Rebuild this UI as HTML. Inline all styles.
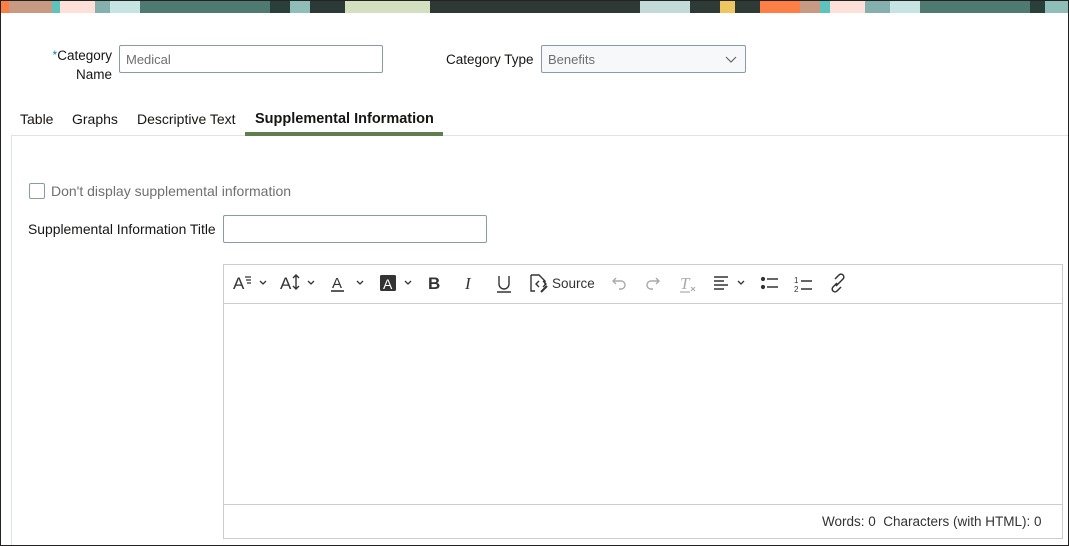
<!DOCTYPE html>
<html><head><meta charset="utf-8"><style>
*{box-sizing:border-box;margin:0;padding:0}
html,body{width:1069px;height:546px;overflow:hidden;background:#fff}
body{font-family:"Liberation Sans",sans-serif;font-size:13px;color:#161513;position:relative}
.abs{position:absolute}
.frame{left:0;top:0;width:1069px;height:546px;border:1px solid #222;pointer-events:none;z-index:5}
.banner{left:0;top:0;width:1069px;height:13px;background:linear-gradient(90deg,#fd7f45 0 9px,#c99a83 9px 52px,#5ec2bd 52px 60px,#fde0d8 60px 95px,#85b0ae 95px 110px,#c6e4e2 110px 140px,#4e7a72 140px 270px,#2a3f3a 270px 290px,#8fbeb9 290px 310px,#2b3a37 310px 345px,#d3e0c0 345px 430px,#2e3935 430px 640px,#c4dad8 640px 690px,#2d3a36 690px 720px,#f0c660 720px 735px,#2d3a36 735px 760px,#fd7f45 760px 800px,#c99a83 800px 820px,#5ec2bd 820px 830px,#fde0d8 830px 865px,#85b0ae 865px 890px,#c6e4e2 890px 920px,#4e7a72 920px 1030px,#2a3f3a 1030px 1045px,#8fbeb9 1045px 1069px)}
.inp{border:1px solid #8a9ba3;border-radius:2px;background:#fff;height:28px;color:#6f6f6f;padding:6px 6px;font-size:13px}
.tab{top:111px;font-size:14px}
</style></head><body>
<div class="abs banner"></div>
<div class="abs frame"></div>
<div class="abs" style="left:47px;top:46px;text-align:right;width:65px;line-height:19px;font-size:13.5px"><span style="color:#1a7ab5;vertical-align:top;font-size:12px">*</span>Category<br>Name</div>
<div class="abs inp" style="left:119px;top:45px;width:264px">Medical</div>
<div class="abs" style="left:446px;top:52px;font-size:13.5px">Category Type</div>
<div class="abs inp" style="left:541px;top:45px;width:205px;background:#f6f8fa">Benefits</div>
<svg class="abs" style="left:725px;top:56px" width="12" height="8"><path d="M1 1l5 5 5-5" fill="none" stroke="#666" stroke-width="1.2"/></svg>
<div class="abs tab" style="left:20px">Table</div>
<div class="abs tab" style="left:72px">Graphs</div>
<div class="abs tab" style="left:137px">Descriptive Text</div>
<div class="abs tab" style="left:255px;font-weight:bold;font-size:14.5px">Supplemental Information</div>
<div class="abs" style="left:11px;top:135px;width:1060px;height:420px;border-left:1px solid #dfe3e6;border-top:1px solid #dfe3e6"></div>
<div class="abs" style="left:245px;top:132px;width:198px;height:4px;background:#5f7d4f"></div>
<div class="abs" style="left:29px;top:183px;width:16px;height:16px;border:1px solid #8a9ba3;border-radius:2px"></div>
<div class="abs" style="left:51px;top:183px;color:#6f6f6f;font-size:14px">Don't display supplemental information</div>
<div class="abs" style="left:28px;top:221px;font-size:13.9px">Supplemental Information Title</div>
<div class="abs inp" style="left:223px;top:215px;width:264px;height:28px"></div>
<div class="abs" style="left:223px;top:264px;width:840px;height:275px;border:1px solid #ccc"></div>
<div class="abs" style="left:224px;top:303px;width:838px;height:1px;background:#ccc"></div>
<div class="abs" style="left:224px;top:504px;width:838px;height:1px;background:#ccc"></div>
<div class="abs" style="left:822px;top:514px;font-size:13.5px;color:#333;white-space:nowrap">Words: 0&nbsp; Characters (with HTML): 0</div>
<svg class="abs" style="left:225px;top:271px" width="640" height="24" fill="none" stroke="#333" stroke-width="1.6">
<text x="8" y="18" font-size="17" fill="#333" stroke="none" font-family="Liberation Sans">A</text><path d="M20 6h6M21 9h5M22 12h4" stroke-width="1.2"/>
<path d="M35 10l3 3 3-3" stroke-width="1.3"/>
<text x="55" y="18" font-size="17" fill="#333" stroke="none" font-family="Liberation Sans">A</text><path d="M71 4v14M68 7l3-3 3 3M68 15l3 3 3-3" stroke-width="1.4"/>
<path d="M83 10l3 3 3-3" stroke-width="1.3"/>
<text x="107" y="17" font-size="15" fill="#333" stroke="none" font-family="Liberation Sans">A</text><path d="M106 20h13"/>
<path d="M132 10l3 3 3-3" stroke-width="1.3"/>
<rect x="155" y="4" width="16" height="16" rx="1.5" fill="#333" stroke="none"/><text x="158" y="18" font-size="14" fill="#fff" stroke="none" font-family="Liberation Sans">A</text>
<path d="M180 10l3 3 3-3" stroke-width="1.3"/>
<text x="203" y="18" font-size="17" font-weight="bold" fill="#333" stroke="none" font-family="Liberation Sans">B</text>
<text x="240" y="18" font-size="17" font-style="italic" fill="#333" stroke="none" font-family="Liberation Serif">I</text>
<path d="M274 5v8a5 5 0 0 0 10 0V5M272 21h14" stroke-width="1.4"/>
<path d="M306 4h8l6 6v4M306 4v16h4M314 10l-3 3 3 3M318 10l3 3-3 3" stroke-width="1.4"/><path d="M316 21l6-6" stroke-width="2"/>
<text x="327" y="17" font-size="13.5" fill="#333" stroke="none" font-family="Liberation Sans">Source</text>
<path d="M388 10h8a4 4 0 0 1 0 8h-2M391 7l-3 3 3 3" stroke="#aaa" stroke-width="1.4"/>
<path d="M434 10h-8a4 4 0 0 0 0 8h2M431 7l3 3-3 3" stroke="#aaa" stroke-width="1.4"/>
<text x="455" y="18" font-size="17" font-style="italic" fill="#aaa" stroke="none" font-family="Liberation Serif">T</text><path d="M466 16l4 4M470 16l-4 4" stroke="#aaa" stroke-width="1.1"/><path d="M455 21h10" stroke="#aaa" stroke-width="1.2"/>
<path d="M489 6h14M489 10h10M489 14h14M489 18h10" stroke-width="1.4"/>
<path d="M513 10l3 3 3-3" stroke-width="1.3"/>
<circle cx="538" cy="8" r="1.3" fill="#333"/><circle cx="538" cy="16" r="1.3" fill="#333"/><path d="M542 8h11M542 16h11" stroke-width="1.4"/>
<path d="M576 10h11M576 18h11" stroke-width="1.4"/><text x="569" y="12" font-size="8" fill="#333" stroke="none" font-family="Liberation Sans">1</text><text x="569" y="21" font-size="8" fill="#333" stroke="none" font-family="Liberation Sans">2</text>
<path d="M612 12l-4 4a2.8 2.8 0 0 0 4 4l4-4M614 12l4-4a2.8 2.8 0 0 0-4-4l-4 4M611 15l4-4" stroke-width="1.5"/>
</svg>
</body></html>
